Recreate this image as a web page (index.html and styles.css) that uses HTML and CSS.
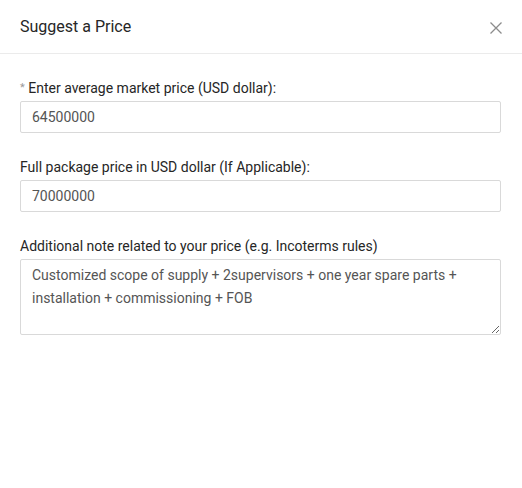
FILE: index.html
```html
<!DOCTYPE html>
<html>
<head>
<meta charset="utf-8">
<link rel="stylesheet" href="styles.css">
</head>
<body>
<div class="modal">
  <div class="header">
    <div class="title">Suggest a Price</div>
    <button class="close" aria-label="Close">
      <svg width="12" height="12" viewBox="0 0 12 12"><path d="M0.5 0.5 L11.5 11.5 M11.5 0.5 L0.5 11.5" stroke="#8c8c8c" stroke-width="1.3" fill="none"/></svg>
    </button>
  </div>
  <div class="body">
    <div class="field">
      <label class="label"><span class="req">*</span> Enter average market price (USD dollar):</label>
      <input class="input" type="text" value="64500000">
    </div>
    <div class="field">
      <label class="label">Full package price in USD dollar (If Applicable):</label>
      <input class="input" type="text" value="70000000">
    </div>
    <div class="field">
      <label class="label">Additional note related to your price (e.g. Incoterms rules)</label>
      <textarea class="textarea">Customized scope of supply + 2supervisors + one year spare parts + installation + commissioning + FOB</textarea>
    </div>
  </div>
</div>
</body>
</html>
```
FILE: styles.css
```css
html, body {
  margin: 0;
  padding: 0;
  background: #fff;
}
body {
  font-family: Roboto, "Liberation Sans", Arial, sans-serif;
  color: #333;
}
.modal {
  width: 522px;
  height: 488px;
  background: #fff;
}
.header {
  height: 53px;
  border-bottom: 1px solid #ebebeb;
  display: flex;
  align-items: center;
  justify-content: space-between;
  padding: 0 20px;
}
.title {
  font-size: 16px;
  color: #262626;
  padding-top: 0;
}
.close {
  border: 0;
  background: none;
  padding: 0;
  margin-right: 0;
  margin-top: 3px;
  width: 12px;
  height: 12px;
  display: flex;
}
.body {
  padding: 24px 21px 20px 20px;
  display: flex;
  flex-direction: column;
  gap: 24px;
}
.field {
  display: flex;
  flex-direction: column;
  gap: 3px;
}
.label {
  font-size: 14px;
  line-height: 20px;
  color: #262626;
}
.req {
  color: #999;
  font-size: 11px;
  vertical-align: 2px;
}
.input, .textarea {
  font-family: Roboto, "Liberation Sans", Arial, sans-serif;
  font-size: 14px;
  color: #555;
  border: 1px solid #d9d9d9;
  border-radius: 2px;
  box-sizing: border-box;
  width: 100%;
  outline: none;
  background: #fff;
  margin: 0;
}
.input {
  height: 32px;
  padding: 0 11px;
}
.textarea {
  height: 76px;
  padding: 4px 11px;
  line-height: 23px;
  resize: vertical;
  display: block;
}
```
